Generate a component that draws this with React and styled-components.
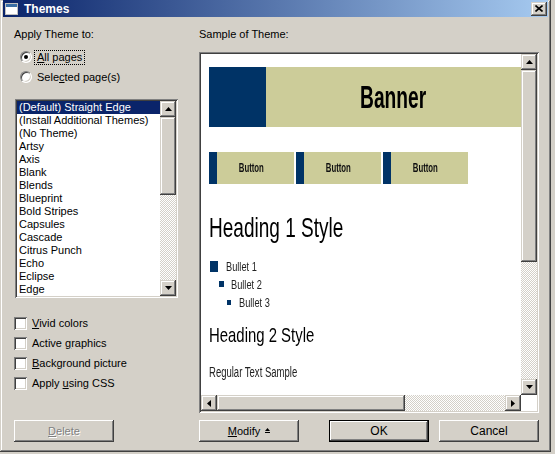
import React from 'react';
import styled, { createGlobalStyle, css } from 'styled-components';

const GlobalStyle = createGlobalStyle`
  html, body { margin: 0; padding: 0; background: #d4d0c8; }
  body {
    font-family: "Liberation Sans", Arial, sans-serif;
    font-size: 11px;
    color: #000;
  }
  * { box-sizing: border-box; }
`;

const buttonRaised = css`
  background: #d4d0c8;
  box-shadow: inset -1px -1px #404040, inset 1px 1px #fff, inset -2px -2px #808080, inset 2px 2px #d4d0c8;
`;

const scrollRaised = css`
  background: #d4d0c8;
  box-shadow: inset -1px -1px #404040, inset 1px 1px #d4d0c8, inset -2px -2px #808080, inset 2px 2px #fff;
`;

const sunken = css`
  box-shadow: inset 1px 1px #808080, inset -1px -1px #fff, inset 2px 2px #404040, inset -2px -2px #d4d0c8;
`;

const Window = styled.div`
  width: 551px;
  height: 452px;
  padding: 0 3px 3px 3px;
  display: flex;
  flex-direction: column;
  background: #d4d0c8;
  box-shadow: inset -1px -1px #404040, inset 1px 1px #d4d0c8, inset -2px -2px #808080, inset 2px 2px #fff;
`;

const TitleBar = styled.div`
  height: 17px;
  display: flex;
  align-items: center;
  padding-left: 2px;
  gap: 6px;
  background: linear-gradient(to right, #0a246a, #a6caf0);
  color: #fff;
  font-weight: bold;
  font-size: 12px;
`;

const CloseButton = styled.div`
  ${scrollRaised};
  margin-left: auto;
  margin-right: 1px;
  width: 16px;
  height: 14px;
  display: flex;
  align-items: center;
  justify-content: center;
`;

const Body = styled.div`
  flex: 1;
  display: grid;
  grid-template-columns: 164px 340px;
  grid-template-rows: 1fr 22px;
  column-gap: 21px;
  row-gap: 7px;
  padding: 11px 9px 7px 11px;
  min-height: 0;
`;

const Pane = styled.div`
  display: flex;
  flex-direction: column;
  min-height: 0;
`;

const Caption = styled.div`
  line-height: 13px;
  height: 13px;
  white-space: nowrap;
`;

const Key = styled.span`
  text-decoration: underline;
`;

const RadioGroup = styled.div`
  margin-top: 6px;
  display: flex;
  flex-direction: column;
`;

const RadioRow = styled.div`
  height: 20px;
  display: flex;
  align-items: center;
  padding-left: 6px;
  gap: 3px;
`;

const RadioDot = styled.span`
  width: 12px;
  height: 12px;
  border-radius: 50%;
  background: #fff;
  border: 1px solid;
  border-color: #808080 #fff #fff #808080;
  box-shadow: inset 1px 1px #404040, inset -1px -1px #d4d0c8;
  display: flex;
  align-items: center;
  justify-content: center;
  &::after {
    content: '';
    width: 4px;
    height: 4px;
    border-radius: 50%;
    background: ${p => (p.$checked ? '#000' : 'transparent')};
  }
`;

const OptionText = styled.span`
  line-height: 13px;
  padding: 0 2px;
  outline: ${p => (p.$focused ? '1px dotted #000' : 'none')};
  outline-offset: 0;
  white-space: nowrap;
`;

const ListBox = styled.div`
  margin-top: 12px;
  margin-left: 1px;
  width: 163px;
  height: 199px;
  padding: 2px;
  background: #fff;
  ${sunken};
  display: grid;
  grid-template-columns: 1fr 16px;
  overflow: hidden;
`;

const ListItems = styled.div`
  overflow: hidden;
`;

const ListItem = styled.div`
  height: 13px;
  line-height: 13px;
  padding-left: 2px;
  white-space: nowrap;
  background: ${p => (p.$selected ? '#0a246a' : 'transparent')};
  color: ${p => (p.$selected ? '#fff' : '#000')};
`;

const ScrollBar = styled.div`
  display: flex;
  flex-direction: ${p => (p.$horizontal ? 'row' : 'column')};
  min-width: 0;
  min-height: 0;
`;

const ScrollButton = styled.div`
  ${scrollRaised};
  flex: none;
  width: 16px;
  height: 16px;
  display: flex;
  align-items: center;
  justify-content: center;
`;

const ScrollThumb = styled.div`
  ${scrollRaised};
  flex: none;
`;

const ScrollTrack = styled.div`
  flex: 1;
  background-color: #d4d0c8;
  background-image: conic-gradient(#fff 25%, transparent 0 50%, #fff 0 75%, transparent 0);
  background-size: 2px 2px;
`;

const CheckList = styled.div`
  margin-top: 15px;
  display: flex;
  flex-direction: column;
`;

const CheckRow = styled.div`
  height: 20px;
  display: flex;
  align-items: center;
  gap: 5px;
  white-space: nowrap;
`;

const CheckBox = styled.span`
  width: 13px;
  height: 13px;
  background: #fff;
  ${sunken};
`;

const PushButton = styled.div`
  ${buttonRaised};
  width: 100px;
  height: 22px;
  display: flex;
  align-items: center;
  justify-content: center;
  gap: 5px;
  font-size: ${p => (p.$large ? '12px' : '11px')};
  color: ${p => (p.$disabled ? '#808080' : '#000')};
  text-shadow: ${p => (p.$disabled ? '1px 1px #fff' : 'none')};
  ${p =>
    p.$default &&
    css`
      box-shadow: inset 0 0 0 1px #000, inset -2px -2px #404040, inset 2px 2px #fff,
        inset -3px -3px #808080, inset 3px 3px #d4d0c8;
    `}
`;

const ButtonRow = styled.div`
  display: flex;
  align-items: stretch;
  gap: 10px;
  & > :nth-child(2) {
    margin-left: 20px;
  }
`;

const PreviewFrame = styled.div`
  flex: 1;
  margin-top: 11px;
  min-height: 0;
  padding: 2px;
  background: #fff;
  ${sunken};
  display: grid;
  grid-template-columns: 320px 16px;
  grid-template-rows: 341px 16px;
`;

const Viewport = styled.div`
  overflow: hidden;
  background: #fff;
  padding: 13px 0 0 8px;
  min-width: 0;
  min-height: 0;
  font-family: "Liberation Sans", Arial, sans-serif;
`;

const Squeeze = styled.span`
  display: inline-block;
  white-space: nowrap;
  transform: scaleX(${p => p.$sx});
  transform-origin: ${p => p.$origin || 'left'} center;
`;

const Banner = styled.div`
  display: flex;
  height: 60px;
`;

const BannerMark = styled.div`
  width: 57px;
  background: #003366;
`;

const BannerBody = styled.div`
  flex: 1;
  background: #cccc99;
  display: flex;
  align-items: center;
  justify-content: center;
  font-size: 32px;
  font-weight: bold;
  color: #000;
`;

const ThemeButtons = styled.div`
  display: flex;
  gap: 2px;
  margin-top: 25px;
`;

const ThemeButton = styled.div`
  width: 85px;
  height: 32px;
  display: flex;
  background: #cccc99;
  font-size: 12px;
  font-weight: bold;
  color: #111;
`;

const ThemeButtonMark = styled.div`
  width: 8px;
  background: #003366;
`;

const ThemeButtonLabel = styled.div`
  flex: 1;
  display: flex;
  align-items: center;
  justify-content: center;
  padding-right: 8px;
`;

const Heading1 = styled.div`
  margin-top: 28px;
  font-size: 28px;
  line-height: 32px;
  color: #000;
`;

const BulletList = styled.div`
  margin-top: 13px;
  display: flex;
  flex-direction: column;
`;

const BulletRow = styled.div`
  height: 18px;
  display: flex;
  align-items: center;
  padding-left: ${p => p.$indent}px;
  gap: ${p => p.$gap}px;
  font-size: 13px;
  color: #222;
`;

const BulletMark = styled.span`
  flex: none;
  width: ${p => p.$w}px;
  height: ${p => p.$h}px;
  background: #003366;
`;

const Heading2 = styled.div`
  margin-top: 12px;
  font-size: 21px;
  line-height: 24px;
  color: #000;
`;

const RegularText = styled.div`
  margin-top: 16px;
  font-size: 14px;
  line-height: 18px;
  color: #222;
`;

const Arrow = ({ dir, color = '#000' }) => {
  const shapes = {
    up: { w: 7, h: 4, pts: '3.5,0 7,4 0,4' },
    down: { w: 7, h: 4, pts: '0,0 7,0 3.5,4' },
    left: { w: 4, h: 7, pts: '4,0 4,7 0,3.5' },
    right: { w: 4, h: 7, pts: '0,0 4,3.5 0,7' },
  };
  const s = shapes[dir];
  return (
    <svg width={s.w} height={s.h} viewBox={`0 0 ${s.w} ${s.h}`}>
      <polygon points={s.pts} fill={color} />
    </svg>
  );
};

const Scroll = ({ horizontal, thumb }) => (
  <ScrollBar $horizontal={horizontal}>
    <ScrollButton>
      <Arrow dir={horizontal ? 'left' : 'up'} />
    </ScrollButton>
    <ScrollThumb style={horizontal ? { width: thumb } : { height: thumb }} />
    <ScrollTrack />
    <ScrollButton>
      <Arrow dir={horizontal ? 'right' : 'down'} />
    </ScrollButton>
  </ScrollBar>
);

const WindowIcon = () => (
  <svg width="13" height="12" viewBox="0 0 13 12">
    <rect x="0.5" y="0.5" width="12" height="11" fill="#fff" stroke="#c0c0c0" />
    <rect x="1" y="1" width="11" height="3" fill="#3a6ea5" />
  </svg>
);

const CloseGlyph = () => (
  <svg width="8" height="7" viewBox="0 0 8 7">
    <path d="M0.5 0.5 L7.5 6.5 M7.5 0.5 L0.5 6.5" stroke="#000" strokeWidth="1.6" />
  </svg>
);

const ModifyGlyph = () => (
  <svg width="5" height="6" viewBox="0 0 5 6">
    <polygon points="2.5,0 5,3 0,3" fill="#000" />
    <rect x="0" y="4" width="5" height="1" fill="#000" />
  </svg>
);

const themes = [
  '(Default) Straight Edge',
  '(Install Additional Themes)',
  '(No Theme)',
  'Artsy',
  'Axis',
  'Blank',
  'Blends',
  'Blueprint',
  'Bold Stripes',
  'Capsules',
  'Cascade',
  'Citrus Punch',
  'Echo',
  'Eclipse',
  'Edge',
];

const options = [
  { pre: '', key: 'V', post: 'ivid colors' },
  { pre: 'Active ', key: 'g', post: 'raphics' },
  { pre: '', key: 'B', post: 'ackground picture' },
  { pre: 'Apply ', key: 'u', post: 'sing CSS' },
];

const bullets = [
  { indent: 1, gap: 8, w: 8, h: 11, text: 'Bullet 1' },
  { indent: 10, gap: 7, w: 5, h: 6, text: 'Bullet 2' },
  { indent: 18, gap: 8, w: 4, h: 5, text: 'Bullet 3' },
];

export default function App() {
  return (
    <>
      <GlobalStyle />
      <Window>
        <TitleBar>
          <WindowIcon />
          <span>Themes</span>
          <CloseButton>
            <CloseGlyph />
          </CloseButton>
        </TitleBar>
        <Body>
          <Pane>
            <Caption>Apply Theme to:</Caption>
            <RadioGroup>
              <RadioRow>
                <RadioDot $checked />
                <OptionText $focused>
                  <Key>A</Key>ll pages
                </OptionText>
              </RadioRow>
              <RadioRow>
                <RadioDot />
                <OptionText>
                  Sele<Key>c</Key>ted page(s)
                </OptionText>
              </RadioRow>
            </RadioGroup>
            <ListBox>
              <ListItems>
                {themes.map((t, i) => (
                  <ListItem key={t} $selected={i === 0}>
                    {t}
                  </ListItem>
                ))}
              </ListItems>
              <Scroll thumb={78} />
            </ListBox>
            <CheckList>
              {options.map(o => (
                <CheckRow key={o.post}>
                  <CheckBox />
                  <span>
                    {o.pre}
                    <Key>{o.key}</Key>
                    {o.post}
                  </span>
                </CheckRow>
              ))}
            </CheckList>
          </Pane>
          <Pane>
            <Caption>Sample of Theme:</Caption>
            <PreviewFrame>
              <Viewport>
                <Banner>
                  <BannerMark />
                  <BannerBody>
                    <Squeeze $sx={0.6} $origin="center">Banner</Squeeze>
                  </BannerBody>
                </Banner>
                <ThemeButtons>
                  {[0, 1, 2].map(i => (
                    <ThemeButton key={i}>
                      <ThemeButtonMark />
                      <ThemeButtonLabel>
                        <Squeeze $sx={0.65} $origin="center">Button</Squeeze>
                      </ThemeButtonLabel>
                    </ThemeButton>
                  ))}
                </ThemeButtons>
                <Heading1>
                  <Squeeze $sx={0.68}>Heading 1 Style</Squeeze>
                </Heading1>
                <BulletList>
                  {bullets.map(b => (
                    <BulletRow key={b.text} $indent={b.indent} $gap={b.gap}>
                      <BulletMark $w={b.w} $h={b.h} />
                      <Squeeze $sx={0.71}>{b.text}</Squeeze>
                    </BulletRow>
                  ))}
                </BulletList>
                <Heading2>
                  <Squeeze $sx={0.71}>Heading 2 Style</Squeeze>
                </Heading2>
                <RegularText>
                  <Squeeze $sx={0.68}>Regular Text Sample</Squeeze>
                </RegularText>
              </Viewport>
              <Scroll thumb={192} />
              <Scroll horizontal thumb={188} />
            </PreviewFrame>
          </Pane>
          <PushButton $disabled>
            <span>
              <Key>D</Key>elete
            </span>
          </PushButton>
          <ButtonRow>
            <PushButton>
              <span>
                <Key>M</Key>odify
              </span>
              <ModifyGlyph />
            </PushButton>
            <PushButton $default $large>
              OK
            </PushButton>
            <PushButton $large>Cancel</PushButton>
          </ButtonRow>
        </Body>
      </Window>
    </>
  );
}
